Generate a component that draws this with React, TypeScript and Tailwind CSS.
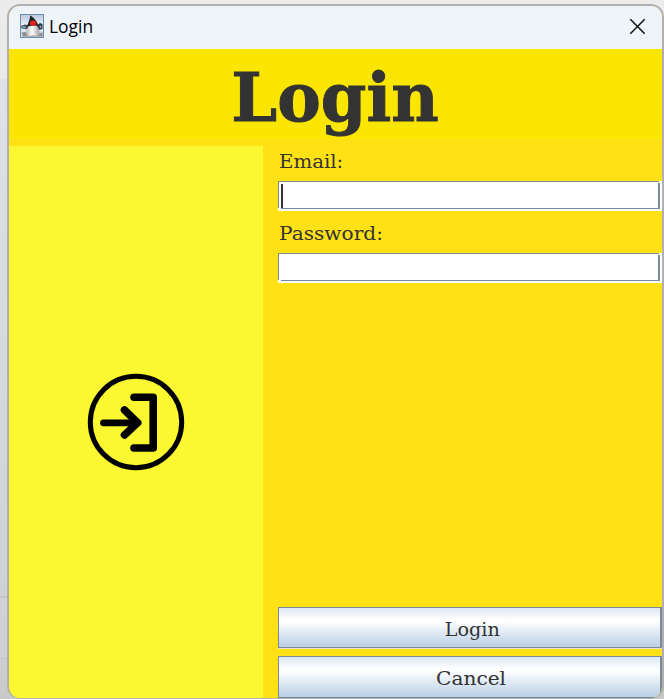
import React from 'react';

function JavaIcon() {
  return (
    <svg width="24" height="24" viewBox="0 0 24 24" className="shrink-0">
      <defs>
        <linearGradient id="tile" x1="0" y1="0" x2="0" y2="1">
          <stop offset="0" stopColor="#b9c9de" />
          <stop offset="0.5" stopColor="#eef1f6" />
          <stop offset="1" stopColor="#ccd4df" />
        </linearGradient>
        <linearGradient id="body" x1="0" y1="0" x2="1" y2="0">
          <stop offset="0" stopColor="#b5b5b5" />
          <stop offset="0.45" stopColor="#ffffff" />
          <stop offset="1" stopColor="#a0a0a0" />
        </linearGradient>
      </defs>
      <rect x="0.5" y="0.5" width="23" height="23" fill="url(#tile)" stroke="#6e8eae" />
      <path d="M1 12l4-1.500 4 1-1 4-6.500-1z" fill="#434f59" />
      <path d="M2.500 13l3 .5" stroke="#8cc3e4" strokeWidth="1.600" />
      <path d="M16 12l4-3 2.500 1v5L18 16z" fill="#2d3740" />
      <path d="M20.500 11.500v2.500" stroke="#86a6bd" strokeWidth="1.500" />
      <path d="M1.500 18.500l5.500-.5 2 3h8l5.500-3v4.500H3z" fill="#8d8d8d" />
      <path d="M10.300 1.300C9.800 5 9 8 6.500 13l3.500-1h6l3 3c-.7-6-3.500-10-8.700-13.700z" fill="#1f2427" />
      <path d="M9 12c-2.500 2.500-3.800 8-2 9.500 2.500 1 4.500 .2 6-.2 1.500 .6 4.500 1 6 0 1.500-3-.2-8-2.500-9.800z" fill="url(#body)" />
      <ellipse cx="13" cy="9.300" rx="3" ry="2.700" fill="#ee201b" />
    </svg>
  );
}

function LoginIcon() {
  return (
    <svg width="98" height="98" viewBox="0 0 98 98" fill="none" stroke="#000" strokeLinecap="round">
      <circle cx="49" cy="49" r="45.700" strokeWidth="5" />
      <path d="M47 24.200H66.200V75H47" strokeWidth="7.600" strokeLinejoin="round" />
      <path d="M16.500 49.800H51" strokeWidth="6.800" />
      <path d="M37.500 37L50.500 49.800L37.500 62" strokeWidth="7.600" strokeLinejoin="round" />
    </svg>
  );
}

function Field({ caret = false }: { caret?: boolean }) {
  return (
    <div className="h-[30px] w-[384px] bg-white pr-[2px] pb-[2px]">
      <div className="relative h-7 w-full">
        <div className="h-[27px] w-[381px] border-t border-l border-[#7a8a99]" />
        <div className="ml-[3px] h-px bg-[#7a8a99]" />
        <div className="absolute top-[2px] right-0 h-[26px] w-[2px] bg-[#7a8a99]" />
        {caret && <div className="absolute top-[3px] left-[3px] h-6 w-[2px] bg-[#333333]" />}
      </div>
    </div>
  );
}

function Button({ label, boxClass, textClass }: { label: string; boxClass: string; textClass: string }) {
  return (
    <div className={`flex w-[384px] justify-center border border-r-2 border-[#7a8a99] bg-[linear-gradient(#dde8f3_0%,#ffffff_30%,#ffffff_34%,#b8cfe5_100%)] ${boxClass}`}>
      <span className={textClass}>{label}</span>
    </div>
  );
}

export default function App() {
  return (
    <div className="flex h-[699px] w-[664px] overflow-hidden bg-[linear-gradient(#ececec_0px,#eaeaea_79px,#dfe2e7_79px,#d8dade_300px,#d0d1d3_596px,#c3c5ca_596px,#c3c5ca_598px,#d2d2d4_598px,#d0d0d2_658px,#c3c4c8_658px,#c3c4c8_659px,#cfcfd1_659px,#c8c8c8_699px)] pt-1 pl-[7px] font-['DejaVu_Serif',serif] text-[#333333]">
      <div className="flex h-[695px] w-[657px] flex-col overflow-hidden rounded-[13px] border-2 border-b border-[#b0b0b0] bg-[#ffe116]">
        <header className="flex h-[43px] shrink-0 items-center bg-[#eff4f9] pl-[11px] font-['Open_Sans',sans-serif] text-black">
          <div className="-mt-1"><JavaIcon /></div>
          <span className="ml-[5px] -mt-[3px] origin-left scale-x-[.97] text-[18px] leading-6">Login</span>
          <svg width="16" height="16" viewBox="0 0 16 16" className="mr-[17px] ml-auto -mt-[3px]">
            <path d="M1.300 1.300L15.700 15.700M15.700 1.300L1.300 15.700" stroke="#111" strokeWidth="1.500" />
          </svg>
        </header>
        <div className="flex h-[90px] shrink-0 justify-center bg-[#fbe602]">
          <h1 className="mt-[8px] mr-[2px] origin-center scale-x-[.96] text-[68px] leading-[80px] font-bold [-webkit-text-stroke:1px_#333333]">Login</h1>
        </div>
        <main className="mt-[7px] flex h-[552px] shrink-0">
          <aside className="flex w-[254px] shrink-0 items-center justify-center bg-[#fbf730]">
            <LoginIcon />
          </aside>
          <section className="ml-[15px] flex w-[384px] flex-col">
            <label className="h-[35px] pl-px text-[19px] leading-[30px]"><span className="inline-block origin-left scale-x-[1.04]">Email:</span></label>
            <Field caret />
            <label className="h-[42px] pl-px pt-[7px] text-[19px] leading-[30px]"><span className="inline-block origin-left scale-x-[1.06]">Password:</span></label>
            <Field />
            <div className="mt-auto flex flex-col">
              <Button label="Login" boxClass="h-[41px]" textClass="mt-[9px] ml-[5px] scale-x-[1.01] text-[19px] leading-6" />
              <div className="mb-[7px] h-px bg-[#dfe3d8]" />
              <Button label="Cancel" boxClass="h-[42px]" textClass="mt-[9px] ml-[3px] scale-x-[1.06] text-[19px] leading-6" />
            </div>
          </section>
        </main>
      </div>
    </div>
  );
}
